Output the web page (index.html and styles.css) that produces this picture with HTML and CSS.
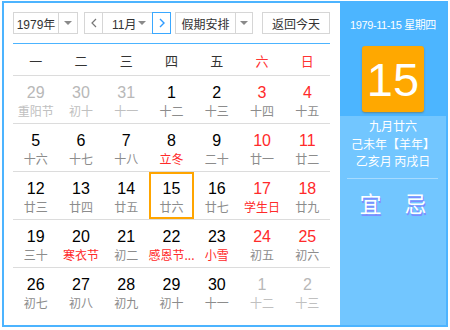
FILE: index.html
```html
<!DOCTYPE html>
<html lang="zh">
<head>
<meta charset="utf-8">
<link rel="stylesheet" href="styles.css">
</head>
<body>
<div class="cal">
  <div class="main">
    <div class="toolbar">
      <div class="sel sel-year">
        <span class="sel-text">1979年</span>
        <span class="sel-arrow"><i class="tri"></i></span>
      </div>
      <div class="month-group">
        <span class="nav nav-prev"><svg width="6" height="10" viewBox="0 0 6 10"><polyline points="5,1 1,5 5,9" fill="none" stroke="#777" stroke-width="1.2"/></svg></span>
        <span class="month-sel"><span class="month-text">11月</span><i class="tri"></i></span>
        <span class="nav nav-next"><svg width="6" height="10" viewBox="0 0 6 10"><polyline points="1,1 5,5 1,9" fill="none" stroke="#2e9bff" stroke-width="1.4"/></svg></span>
      </div>
      <div class="sel sel-holiday">
        <span class="sel-text">假期安排</span>
        <span class="sel-arrow"><i class="tri"></i></span>
      </div>
      <div class="btn-today">返回今天</div>
    </div>
    <div class="divider"></div>
    <div class="weekdays">
      <span>一</span><span>二</span><span>三</span><span>四</span><span>五</span><span class="red">六</span><span class="red">日</span>
    </div>
    <div class="row">
      <div class="cell other"><b>29</b><em>重阳节</em></div>
      <div class="cell other"><b>30</b><em>初十</em></div>
      <div class="cell other"><b>31</b><em>十一</em></div>
      <div class="cell"><b>1</b><em>十二</em></div>
      <div class="cell"><b>2</b><em>十三</em></div>
      <div class="cell wk"><b>3</b><em>十四</em></div>
      <div class="cell wk"><b>4</b><em>十五</em></div>
    </div>
    <div class="row">
      <div class="cell"><b>5</b><em>十六</em></div>
      <div class="cell"><b>6</b><em>十七</em></div>
      <div class="cell"><b>7</b><em>十八</em></div>
      <div class="cell"><b>8</b><em class="fest">立冬</em></div>
      <div class="cell"><b>9</b><em>二十</em></div>
      <div class="cell wk"><b>10</b><em>廿一</em></div>
      <div class="cell wk"><b>11</b><em>廿二</em></div>
    </div>
    <div class="row">
      <div class="cell"><b>12</b><em>廿三</em></div>
      <div class="cell"><b>13</b><em>廿四</em></div>
      <div class="cell"><b>14</b><em>廿五</em></div>
      <div class="cell selected"><b>15</b><em>廿六</em></div>
      <div class="cell"><b>16</b><em>廿七</em></div>
      <div class="cell wk"><b>17</b><em class="fest">学生日</em></div>
      <div class="cell wk"><b>18</b><em>廿九</em></div>
    </div>
    <div class="row">
      <div class="cell"><b>19</b><em>三十</em></div>
      <div class="cell"><b>20</b><em class="fest">寒衣节</em></div>
      <div class="cell"><b>21</b><em>初二</em></div>
      <div class="cell"><b>22</b><em class="fest">感恩节...</em></div>
      <div class="cell"><b>23</b><em class="fest">小雪</em></div>
      <div class="cell wk"><b>24</b><em>初五</em></div>
      <div class="cell wk"><b>25</b><em>初六</em></div>
    </div>
    <div class="row">
      <div class="cell"><b>26</b><em>初七</em></div>
      <div class="cell"><b>27</b><em>初八</em></div>
      <div class="cell"><b>28</b><em>初九</em></div>
      <div class="cell"><b>29</b><em>初十</em></div>
      <div class="cell"><b>30</b><em>十一</em></div>
      <div class="cell other"><b>1</b><em>十二</em></div>
      <div class="cell other"><b>2</b><em>十三</em></div>
    </div>
  </div>
  <div class="side">
    <div class="side-top">
      <div class="side-date">1979-11-15 星期四</div>
      <div class="big-day">15</div>
    </div>
    <div class="side-bottom">
      <div class="lunar">
        <div>九月廿六</div>
        <div>己未年【羊年】</div>
        <div>乙亥月 丙戌日</div>
      </div>
      <div class="side-line"></div>
      <div class="yiji"><span>宜</span><span>忌</span></div>
    </div>
  </div>
</div>
</body>
</html>
```
FILE: styles.css
```css
* { box-sizing: border-box; }
body {
  margin: 0;
  background: #fff;
  font-family: "Liberation Sans", "Noto Sans CJK SC", sans-serif;
  color: #333;
}
.cal {
  margin: 1px 0 0 2px;
  width: 446px;
  height: 326px;
  border: 2px solid #4cb4ff;
  display: flex;
}
.main {
  width: 336px;
  padding: 9px 10px 0 9px;
  background: #fff;
}
.toolbar {
  display: flex;
  height: 22px;
  font-size: 12px;
  color: #333;
}
.sel {
  display: flex;
  border: 1px solid #d6d6d6;
  height: 22px;
}
.sel-text {
  display: flex;
  align-items: center;
  justify-content: center;
}
.sel-arrow {
  display: flex;
  align-items: center;
  justify-content: center;
  border-left: 1px solid #d6d6d6;
}
.tri {
  display: block;
  width: 0;
  height: 0;
  border-left: 4px solid transparent;
  border-right: 4px solid transparent;
  border-top: 4px solid #8a8a8a;
}
.sel-year { width: 65px; }
.sel-year .sel-text { width: 44px; }
.sel-year .sel-arrow { width: 19px; }
.month-group {
  display: flex;
  margin-left: 6px;
  height: 22px;
}
.nav {
  width: 19px;
  height: 22px;
  display: flex;
  align-items: center;
  justify-content: center;
  border: 1px solid #d6d6d6;
}
.nav-next {
  border-color: #3aa8ff;
  margin-left: -1px;
}
.month-sel {
  width: 50px;
  height: 22px;
  display: flex;
  align-items: center;
  border-top: 1px solid #d6d6d6;
  border-bottom: 1px solid #d6d6d6;
  padding-left: 9px;
}
.month-text { width: 26px; }
.sel-holiday {
  width: 78px;
  margin-left: 4px;
}
.sel-holiday .sel-text { width: 59px; }
.sel-holiday .sel-arrow { width: 17px; }
.btn-today {
  margin-left: 9px;
  width: 68px;
  height: 22px;
  border: 1px solid #d6d6d6;
  display: flex;
  align-items: center;
  justify-content: center;
}
.divider {
  margin-top: 9px;
  height: 1px;
  background: #4cb4ff;
}
.weekdays {
  display: grid;
  grid-template-columns: repeat(7, 1fr);
  height: 31px;
  align-items: center;
  text-align: center;
  font-size: 13px;
  color: #333;
}
.weekdays span { padding-top: 1px; }
.red { color: #ff3333; }
.row {
  display: grid;
  grid-template-columns: repeat(7, 1fr);
  height: 48px;
  border-top: 1px solid #dcdcdc;
}
.cell {
  display: flex;
  flex-direction: column;
  align-items: center;
  padding-top: 8px;
  height: 47px;
  min-width: 0;
}
.cell b {
  font-weight: normal;
  font-size: 16px;
  line-height: 18px;
  color: #000;
}
.cell em {
  font-style: normal;
  font-size: 12px;
  line-height: 18px;
  color: #8c8c8c;
  white-space: nowrap;
  font-family: "Noto Sans CJK SC", sans-serif;
}
.cell.wk b { color: #ff2a2a; }
.cell.other b { color: #b8b8b8; }
.cell.other em { color: #c0c0c0; }
.cell em.fest { color: #ff2a2a; }
.cell.selected { box-shadow: inset 0 0 0 2px #ffa500; }
.side {
  width: 106px;
  display: flex;
  flex-direction: column;
  background: #72c6ff;
  color: #fff;
}
.side-top {
  background: #4cb5ff;
  padding: 14px 0 4px;
  display: flex;
  flex-direction: column;
  align-items: center;
}
.side-date {
  font-size: 11px;
  line-height: 16px;
  letter-spacing: -0.4px;
  white-space: nowrap;
}
.big-day {
  margin-top: 13px;
  width: 62px;
  height: 66px;
  background: #ffa800;
  border-radius: 3px;
  box-shadow: 0 1px 2px rgba(120, 80, 0, 0.45);
  display: flex;
  align-items: center;
  justify-content: center;
  font-size: 47px;
  font-family: "Liberation Sans", sans-serif;
  color: #fff;
}
.side-bottom {
  padding-top: 1px;
}
.lunar {
  text-align: center;
  font-size: 12px;
  line-height: 17.5px;
  font-family: "Noto Sans CJK SC", sans-serif;
}
.side-line {
  margin: 8px 8px 0 7px;
  height: 1px;
  background: #a6dbff;
}
.yiji {
  margin-top: 8px;
  display: flex;
  justify-content: center;
  gap: 23px;
  font-size: 22px;
  line-height: 30px;
  font-family: "Noto Sans CJK SC", sans-serif;
  text-shadow: 1px 2px 0 #7f8cff;
}
```
